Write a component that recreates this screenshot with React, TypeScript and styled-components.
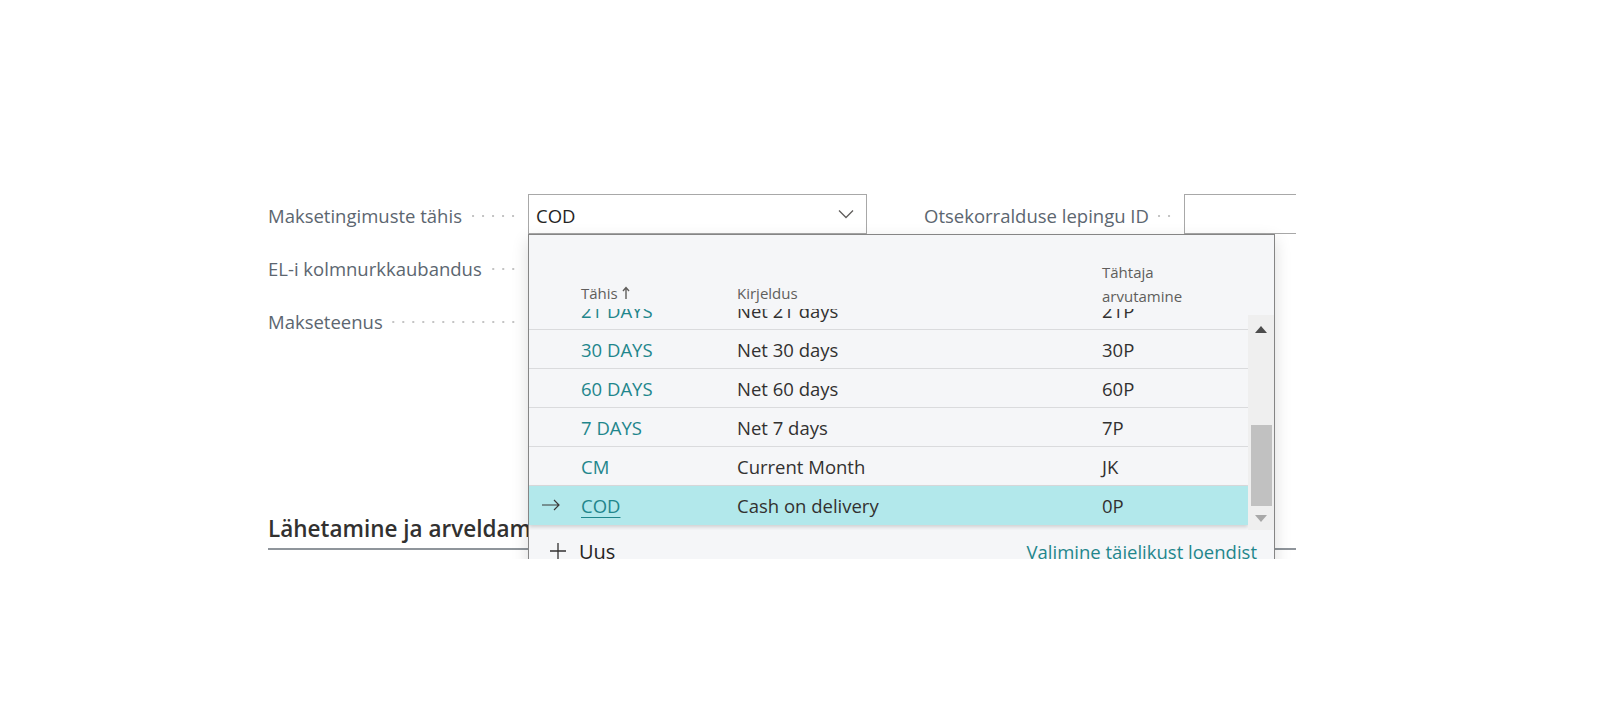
import styled, { createGlobalStyle } from "styled-components";

const GlobalStyle = createGlobalStyle`
  html, body {
    margin: 0;
    background: #ffffff;
  }
  body {
    font-family: "Open Sans", "Noto Sans", sans-serif;
  }
`;

type Term = { code: string; desc: string; due: string; selected?: boolean };

const terms: Term[] = [
  { code: "10 DAYS", desc: "Net 10 days", due: "10P" },
  { code: "14 DAYS", desc: "Net 14 days", due: "14P" },
  { code: "1M(8D)", desc: "1 Month/2% 8 days", due: "1K" },
  { code: "21 DAYS", desc: "Net 21 days", due: "21P" },
  { code: "30 DAYS", desc: "Net 30 days", due: "30P" },
  { code: "60 DAYS", desc: "Net 60 days", due: "60P" },
  { code: "7 DAYS", desc: "Net 7 days", due: "7P" },
  { code: "CM", desc: "Current Month", due: "JK" },
  { code: "COD", desc: "Cash on delivery", due: "0P", selected: true },
];

const Viewport = styled.div`
  position: relative;
  width: 1296px;
  height: 559px;
  overflow: hidden;
  padding: 194px 0 0 268px;
  box-sizing: border-box;
`;

const Form = styled.div`
  width: 1255px;
`;

const FieldGrid = styled.div`
  display: grid;
  grid-template-columns: 599px 599px;
  column-gap: 57px;
  align-items: start;
`;

const Column = styled.div`
  display: flex;
  flex-direction: column;
  gap: 13px;
`;

const Field = styled.div`
  display: flex;
  align-items: center;
  height: 40px;
`;

const Label = styled.span`
  font-size: 18.5px;
  color: #5c6670;
  white-space: nowrap;
  padding-top: 3px;
`;

const Leader = styled.span`
  flex: 1;
  height: 4px;
  margin: 4px 10px 0 8px;
  background-image: radial-gradient(circle, #c4c4c4 0.9px, transparent 1.4px);
  background-size: 10px 4px;
  background-position: right center;
  background-repeat: repeat-x;
`;

const InputBox = styled.div`
  position: relative;
  flex: none;
  width: 339px;
  height: 40px;
  box-sizing: border-box;
  border: 1px solid #a8a8a8;
  background: #ffffff;
  display: flex;
  align-items: center;
  justify-content: space-between;
  padding: 3px 12px 0 7px;
  font-size: 18.5px;
  color: #252423;
`;

const Chevron = styled.svg`
  width: 16px;
  height: 10px;
  margin-top: -3px;
`;

const Dropdown = styled.div`
  position: absolute;
  z-index: 10;
  top: calc(100% + 1px);
  left: -1px;
  width: 747px;
  box-sizing: border-box;
  background: #f5f6f8;
  border: 1px solid #858585;
  box-shadow: 0 6px 16px rgba(0, 0, 0, 0.14);
  display: flex;
  flex-direction: column;
`;

const cols = "52px 156px 365px 1fr";

const HeaderRow = styled.div`
  display: grid;
  grid-template-columns: ${cols};
  align-items: end;
  height: 74px;
  padding-right: 26px;
  font-size: 15px;
  line-height: 23.5px;
  color: #605e5c;
`;

const HeadCell = styled.div<{ $col: number; $lift?: number }>`
  grid-column: ${(p) => p.$col};
  padding-bottom: ${(p) => p.$lift ?? 0}px;
  display: flex;
  align-items: center;
  gap: 4px;
`;

const ListArea = styled.div`
  display: flex;
  height: 221px;
`;

const Rows = styled.div`
  flex: 1;
  overflow: hidden;
  display: flex;
  flex-direction: column;
  justify-content: flex-end;
  padding-bottom: 5px;
`;

const Row = styled.div<{ $selected?: boolean }>`
  flex: none;
  display: grid;
  grid-template-columns: ${cols};
  align-items: center;
  height: 39px;
  box-sizing: border-box;
  font-size: 18.5px;
  color: #323130;
  background: ${(p) => (p.$selected ? "#b2e8eb" : "transparent")};
  border-bottom: 1px solid ${(p) => (p.$selected ? "transparent" : "#dadbdd")};
  box-shadow: ${(p) => (p.$selected ? "0 2px 4px rgba(0,0,0,0.16)" : "none")};
`;

const Cell = styled.div`
  white-space: nowrap;
  padding-top: 1px;
`;

const ArrowCell = styled.div`
  display: flex;
  justify-content: flex-start;
  padding-left: 13px;
`;

const Code = styled.span<{ $selected?: boolean }>`
  color: #1f868c;
  text-decoration: ${(p) => (p.$selected ? "underline" : "none")};
  text-underline-offset: 4px;
  text-decoration-thickness: 1px;
`;

const Scrollbar = styled.div`
  flex: none;
  width: 26px;
  margin-top: 6px;
  background: #efefef;
  display: flex;
  flex-direction: column;
`;

const ScrollButton = styled.div<{ $h: number }>`
  height: ${(p) => p.$h}px;
  display: flex;
  align-items: center;
  justify-content: center;
`;

const Track = styled.div`
  flex: 1;
  display: flex;
  flex-direction: column;
  justify-content: flex-end;
`;

const Thumb = styled.div`
  height: 81px;
  margin: 0 2px 0 3px;
  background: #c1c1c1;
`;

const Footer = styled.div`
  display: flex;
  align-items: center;
  justify-content: space-between;
  height: 42px;
  padding: 0 17px 0 20px;
`;

const NewAction = styled.div`
  display: flex;
  align-items: center;
  gap: 12px;
  font-size: 20px;
  color: #252423;
`;

const FullListLink = styled.span`
  font-size: 18.5px;
  color: #1f868c;
`;

const Section = styled.div`
  margin-top: 174px;
`;

const SectionTitle = styled.h2`
  margin: 0;
  font-size: 22.5px;
  font-weight: 600;
  line-height: 29px;
  color: #323130;
  padding-bottom: 5px;
  border-bottom: 2px solid #8f959b;
`;

const Triangle = ({ up, color }: { up?: boolean; color: string }) => (
  <svg width="12" height="7" viewBox="0 0 12 7">
    <polygon points={up ? "0,7 12,7 6,0" : "0,0 12,0 6,7"} fill={color} />
  </svg>
);

function TermsDropdown() {
  return (
    <Dropdown>
      <HeaderRow>
        <HeadCell $col={2} $lift={4}>
          Tähis
          <svg width="8" height="14" viewBox="0 0 8 14">
            <path d="M4 13V2M1 5l3-3.5L7 5" stroke="#605e5c" strokeWidth="1.4" fill="none" />
          </svg>
        </HeadCell>
        <HeadCell $col={3} $lift={4}>Kirjeldus</HeadCell>
        <HeadCell $col={4} $lift={1}>
          Tähtaja
          <br />
          arvutamine
        </HeadCell>
      </HeaderRow>
      <ListArea>
        <Rows>
          {terms.map((t) => (
            <Row key={t.code} $selected={t.selected}>
              <ArrowCell>
                {t.selected && (
                  <svg width="19" height="12" viewBox="0 0 19 12">
                    <path d="M0 6h17M12 1l5 5-5 5" stroke="#3b3a39" strokeWidth="1.2" fill="none" />
                  </svg>
                )}
              </ArrowCell>
              <Cell>
                <Code $selected={t.selected}>{t.code}</Code>
              </Cell>
              <Cell>{t.desc}</Cell>
              <Cell>{t.due}</Cell>
            </Row>
          ))}
        </Rows>
        <Scrollbar>
          <ScrollButton $h={28}>
            <Triangle up color="#4d4d4d" />
          </ScrollButton>
          <Track>
            <Thumb />
          </Track>
          <ScrollButton $h={24}>
            <Triangle color="#a8a8a8" />
          </ScrollButton>
        </Scrollbar>
      </ListArea>
      <Footer>
        <NewAction>
          <svg width="18" height="18" viewBox="0 0 18 18">
            <path d="M9 1v16M1 9h16" stroke="#323130" strokeWidth="1.3" />
          </svg>
          Uus
        </NewAction>
        <FullListLink>Valimine täielikust loendist</FullListLink>
      </Footer>
    </Dropdown>
  );
}

export default function App() {
  return (
    <>
      <GlobalStyle />
      <Viewport>
        <Form>
          <FieldGrid>
            <Column>
              <Field>
                <Label>Maksetingimuste tähis</Label>
                <Leader />
                <InputBox>
                  COD
                  <Chevron viewBox="0 0 16 10">
                    <path d="M1 1.5l7 7 7-7" stroke="#605e5c" strokeWidth="1.3" fill="none" />
                  </Chevron>
                  <TermsDropdown />
                </InputBox>
              </Field>
              <Field>
                <Label>EL-i kolmnurkkaubandus</Label>
                <Leader />
                <InputBox />
              </Field>
              <Field>
                <Label>Makseteenus</Label>
                <Leader />
                <InputBox />
              </Field>
            </Column>
            <Column>
              <Field>
                <Label>Otsekorralduse lepingu ID</Label>
                <Leader />
                <InputBox />
              </Field>
            </Column>
          </FieldGrid>
          <Section>
            <SectionTitle>Lähetamine ja arveldamine</SectionTitle>
          </Section>
        </Form>
      </Viewport>
    </>
  );
}
